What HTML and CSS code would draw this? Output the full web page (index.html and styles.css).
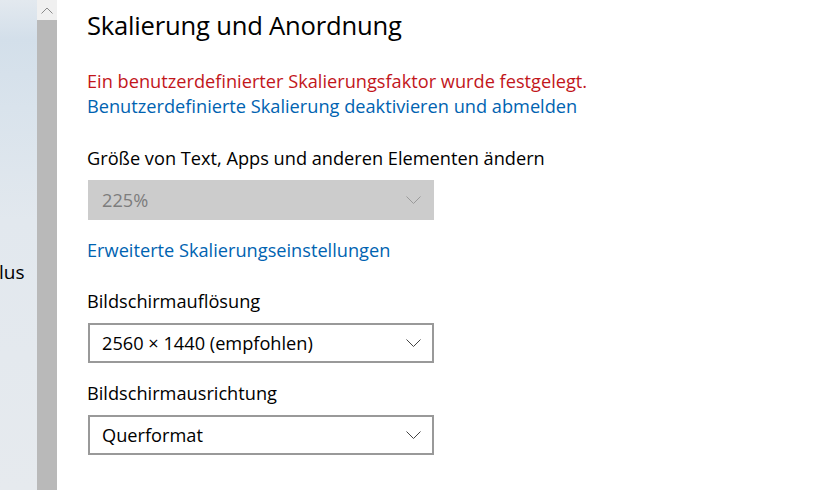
FILE: index.html
```html
<!DOCTYPE html>
<html lang="de">
<head>
<meta charset="utf-8">
<title>Skalierung und Anordnung</title>
<link rel="stylesheet" href="styles.css">
</head>
<body>
<div class="app">
  <nav class="nav">
    <span class="nav-text">lus</span>
  </nav>
  <div class="scrollbar">
    <div class="scroll-up">
      <svg width="12" height="7" viewBox="0 0 12 7"><path d="M0.5 6.5 L6 1 L11.5 6.5" fill="none" stroke="#8a8a8a" stroke-width="1"/></svg>
    </div>
    <div class="scroll-thumb"></div>
  </div>
  <main class="main">
    <h1 class="title">Skalierung und Anordnung</h1>
    <p class="line error">Ein benutzerdefinierter Skalierungsfaktor wurde festgelegt.</p>
    <p class="line link">Benutzerdefinierte Skalierung deaktivieren und abmelden</p>
    <p class="line label first-label">Größe von Text, Apps und anderen Elementen ändern</p>
    <div class="select disabled">
      <span>225%</span>
      <svg class="chev" width="15" height="8" viewBox="0 0 15 8"><path d="M0.5 0.5 L7.5 7.5 L14.5 0.5" fill="none" stroke="#9a9a9a" stroke-width="1"/></svg>
    </div>
    <p class="line link adv">Erweiterte Skalierungseinstellungen</p>
    <p class="line label sec-label">Bildschirmauflösung</p>
    <div class="select">
      <span>2560 × 1440 (empfohlen)</span>
      <svg class="chev" width="15" height="8" viewBox="0 0 15 8"><path d="M0.5 0.5 L7.5 7.5 L14.5 0.5" fill="none" stroke="#444" stroke-width="1"/></svg>
    </div>
    <p class="line label third-label">Bildschirmausrichtung</p>
    <div class="select">
      <span>Querformat</span>
      <svg class="chev" width="15" height="8" viewBox="0 0 15 8"><path d="M0.5 0.5 L7.5 7.5 L14.5 0.5" fill="none" stroke="#444" stroke-width="1"/></svg>
    </div>
  </main>
</div>
</body>
</html>
```
FILE: styles.css
```css
html, body {
  margin: 0;
  padding: 0;
  background: #fff;
}
body {
  font-family: "Open Sans", "Noto Sans", sans-serif;
  color: #000;
}
.app {
  display: flex;
  width: 817px;
  height: 490px;
  overflow: hidden;
}
.nav {
  width: 37px;
  flex: none;
  background: linear-gradient(to bottom, #e3e9ef 0%, #d3dfea 8%, #d9e3ec 22%, #e2e8ee 45%, #e6eaee 100%);
  padding-top: 259px;
  box-sizing: border-box;
  overflow: hidden;
}
.nav-text {
  display: block;
  font-size: 19px;
  line-height: 26px;
  margin-left: -1px;
  white-space: nowrap;
}
.scrollbar {
  width: 20px;
  flex: none;
  display: flex;
  flex-direction: column;
}
.scroll-up {
  height: 20px;
  background: #f0f0f0;
  display: flex;
  align-items: center;
  justify-content: center;
}
.scroll-thumb {
  flex: 1;
  background: #b9b9b9;
}
.main {
  flex: 1;
  padding: 8px 0 0 30px;
}
.title {
  margin: 0;
  font-size: 25.6px;
  font-weight: 400;
  line-height: 36px;
  letter-spacing: -0.2px;
}
.line {
  margin: 0;
  font-size: 18.2px;
  line-height: 25px;
  white-space: nowrap;
}
.error {
  color: #c2161b;
  margin-top: 25px;
}
.link {
  color: #0063b1;
}
.first-label {
  margin-top: 27px;
}
.adv {
  margin-top: 18px;
}
.sec-label {
  margin-top: 26px;
}
.third-label {
  margin-top: 18px;
}
.select {
  margin: 9px 0 0 1px;
  width: 346px;
  height: 40px;
  box-sizing: border-box;
  border: 2px solid #999;
  display: flex;
  align-items: center;
  justify-content: space-between;
  padding: 0 11px 0 12px;
  font-size: 18.2px;
  background: #fff;
}
.select.disabled {
  background: #cccccc;
  border-color: #cccccc;
  color: #7d7d7d;
}
.chev {
  display: block;
}
```
